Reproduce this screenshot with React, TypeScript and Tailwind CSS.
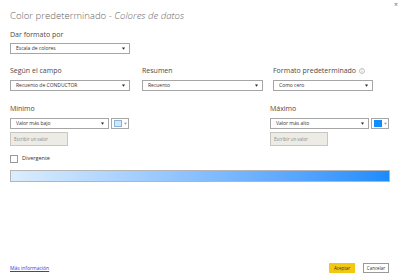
import React from "react";

const font = { fontFamily: '"Open Sans", "Noto Sans", sans-serif' };

function Caret() {
  return (
    <svg width="3" height="3" viewBox="0 0 4 4" className="shrink-0">
      <path d="M0 0.5 L4 0.5 L2 3.5 Z" fill="#222" />
    </svg>
  );
}

function Select({ text, w }: { text: string; w: string }) {
  return (
    <div className={`${w} h-[11px] border border-[#a6a6a6] bg-white flex items-center justify-between pl-[5px] pr-[4px]`}>
      <span className="text-[5px] leading-none text-[#333]">{text}</span>
      <Caret />
    </div>
  );
}

function ColorBtn({ color, border }: { color: string; border: string }) {
  return (
    <div className="w-[18px] h-[11px] border border-[#a6a6a6] bg-white flex items-center gap-[2px] pl-[2px]">
      <div className={`w-[8px] h-[7px] ${color} border ${border}`} />
      <svg width="3" height="3" viewBox="0 0 4 4">
        <path d="M0 1 L4 1 L2 3.5 Z" fill="#999" />
      </svg>
    </div>
  );
}

function Input() {
  return (
    <div className="w-[58px] h-[14px] border border-[#c8c6c0] bg-[#ecebe6] flex items-center pl-[3px] mt-[3px]">
      <span className="text-[4.5px] leading-none text-[#8a8a8a]">Escribir un valor</span>
    </div>
  );
}

function Label({ children }: { children: React.ReactNode }) {
  return <div className="text-[7px] leading-[9px] text-[#4a4a4a]">{children}</div>;
}

export default function App() {
  return (
    <div style={font} className="w-[399px] h-[277px] bg-white relative overflow-hidden">
      <div className="absolute right-[1px] top-[1px] text-[7px] leading-none text-[#666]">×</div>
      <div className="flex flex-col h-full px-[10px]">
        <div className="mt-[9px] text-[9.6px] leading-[13px] font-light text-[#666]">
          Color predeterminado - <span className="italic">Colores de datos</span>
        </div>
        <div className="mt-[8px]"><Label>Dar formato por</Label></div>
        <div className="mt-[4px]"><Select text="Escala de colores" w="w-[120px]" /></div>

        <div className="mt-[12px] flex">
          <div className="w-[132px]">
            <Label>Según el campo</Label>
            <div className="mt-[5px]"><Select text="Recuento de CONDUCTOR" w="w-[120px]" /></div>
          </div>
          <div className="w-[131px]">
            <Label>Resumen</Label>
            <div className="mt-[5px]"><Select text="Recuento" w="w-[121px]" /></div>
          </div>
          <div>
            <div className="flex items-center gap-[3px]">
              <Label>Formato predeterminado</Label>
              <svg width="6" height="6" viewBox="0 0 6 6">
                <circle cx="3" cy="3" r="2.5" fill="none" stroke="#999" strokeWidth="0.6" />
                <rect x="2.7" y="2.5" width="0.6" height="2" fill="#999" />
                <rect x="2.7" y="1.4" width="0.6" height="0.6" fill="#999" />
              </svg>
            </div>
            <div className="mt-[5px]"><Select text="Como cero" w="w-[100px]" /></div>
          </div>
        </div>

        <div className="mt-[13px] flex">
          <div className="w-[263px]">
            <Label>Mínimo</Label>
            <div className="mt-[5px] flex gap-[2px]">
              <Select text="Valor más bajo" w="w-[99px]" />
              <ColorBtn color="bg-[#cfe6fb]" border="border-[#8ab4dc]" />
            </div>
            <Input />
          </div>
          <div>
            <Label>Máximo</Label>
            <div className="mt-[5px] flex gap-[2px]">
              <Select text="Valor más alto" w="w-[99px]" />
              <ColorBtn color="bg-[#118dff]" border="border-[#118dff]" />
            </div>
            <Input />
          </div>
        </div>

        <div className="mt-[9px] flex items-center gap-[4px]">
          <div className="w-[8px] h-[8px] border border-[#999] bg-white" />
          <span className="text-[5.5px] leading-none text-[#333]">Divergente</span>
        </div>

        <div className="mt-[7px] w-[380px] h-[12px] border border-[#b5b5b5] bg-gradient-to-r from-[#dcedfd] to-[#1a8cfb]" />

        <div className="mt-auto mb-[4px] flex items-center">
          <span className="text-[5px] leading-none text-[#3a3ae0] underline">Más información</span>
          <div className="ml-auto flex gap-[8px]">
            <div className="w-[26px] h-[10px] bg-[#f2c811] flex items-center justify-center text-[4.5px] text-[#333]">Aceptar</div>
            <div className="w-[26px] h-[10px] border border-[#999] bg-white flex items-center justify-center text-[4.5px] text-[#333]">Cancelar</div>
          </div>
        </div>
      </div>
    </div>
  );
}
